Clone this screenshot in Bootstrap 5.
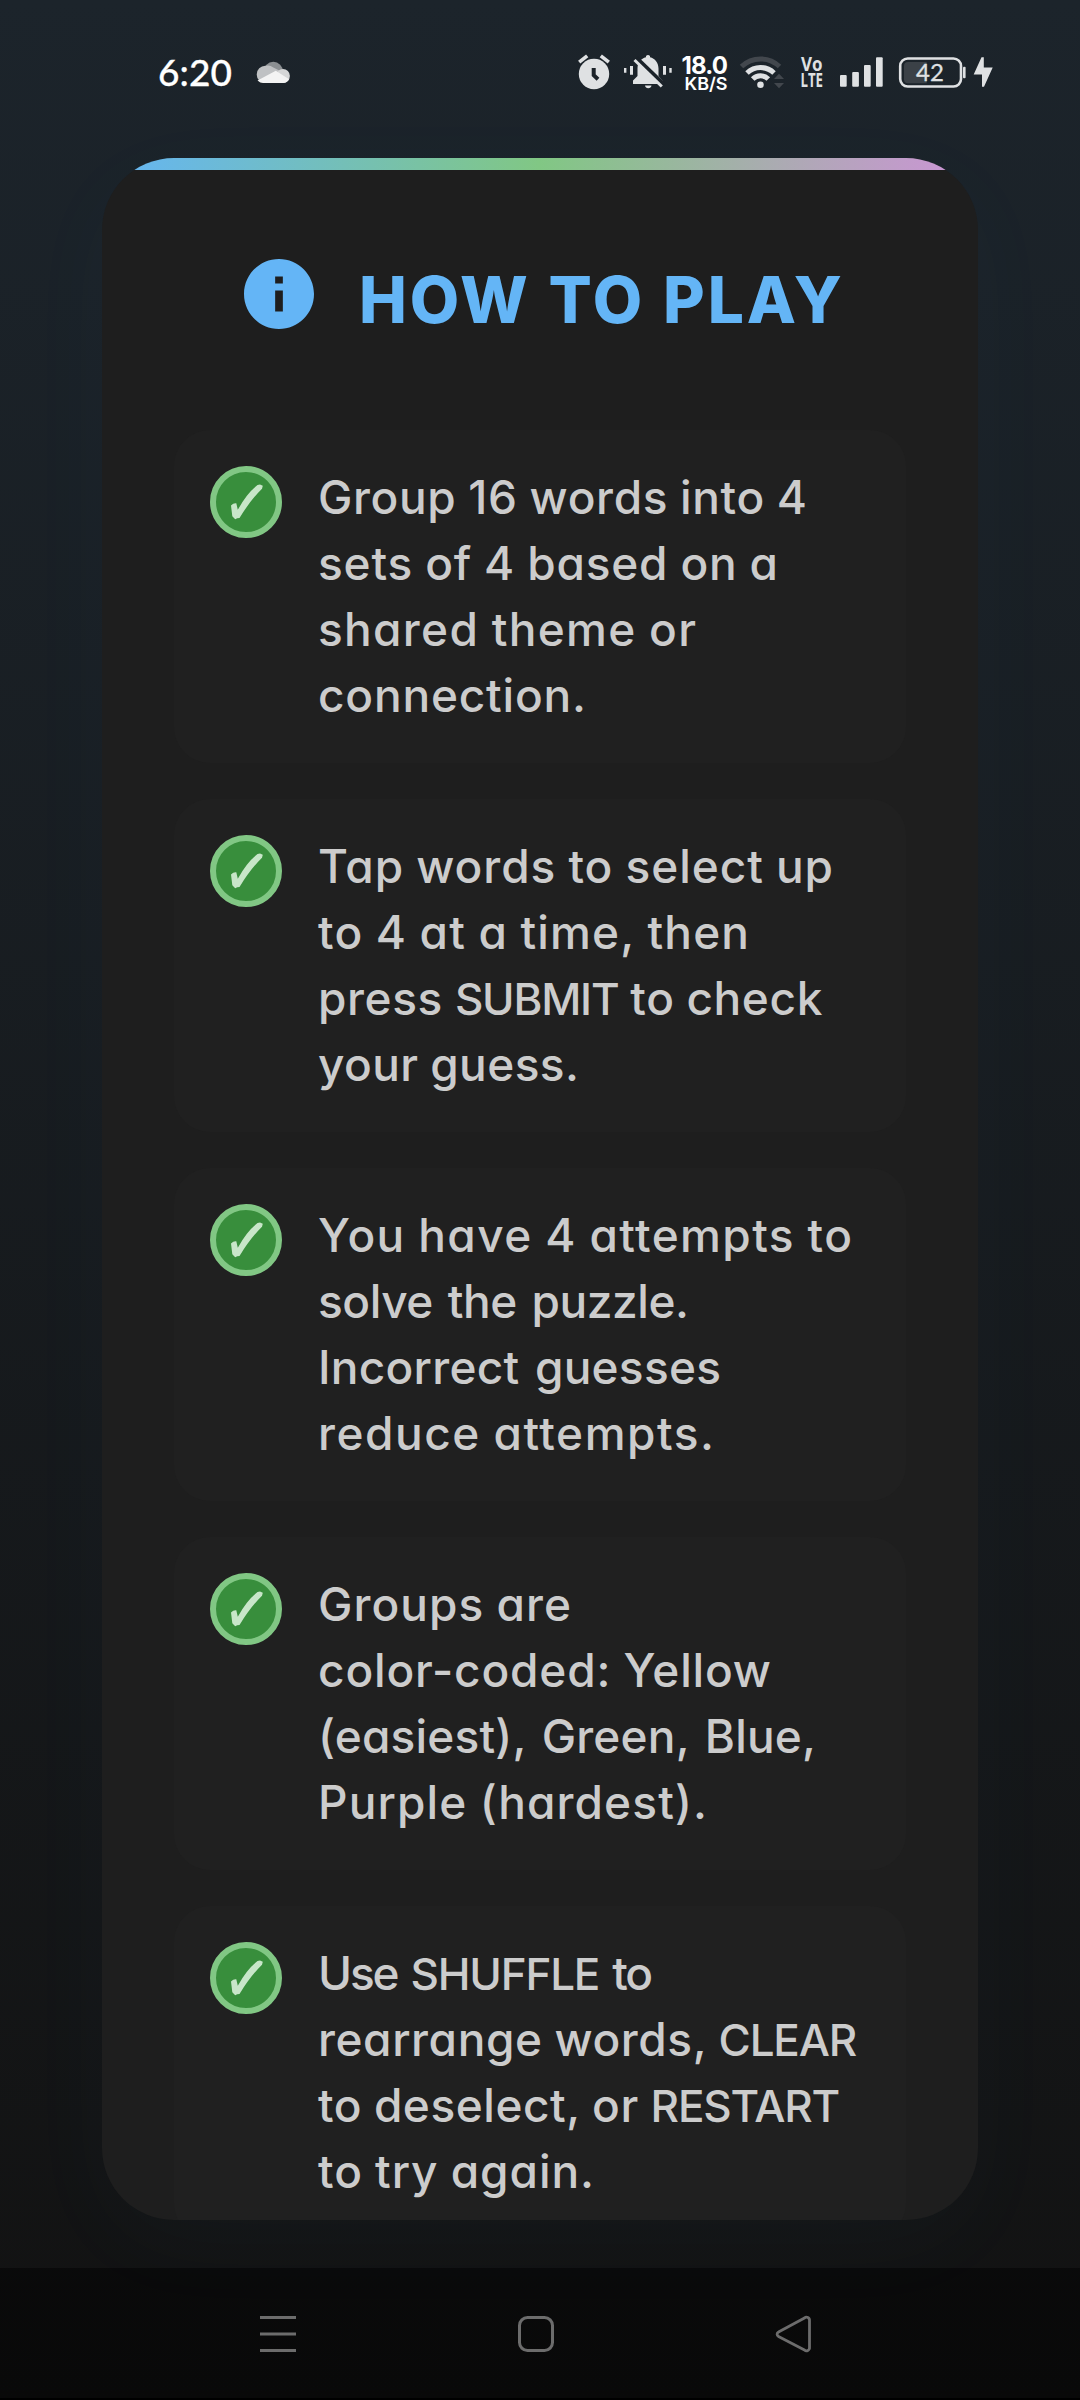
<!DOCTYPE html>
<html lang="en">
<head>
<meta charset="utf-8">
<meta name="viewport" content="width=device-width, initial-scale=1">
<title>How to play</title>
<link href="https://cdn.jsdelivr.net/npm/bootstrap@5.3.0/dist/css/bootstrap.min.css" rel="stylesheet">
<style>
  body { background: #121212; font-family: Inter, "Liberation Sans", sans-serif; }
  .phone { width: 1080px; height: 2400px; background: linear-gradient(180deg, #1c242b 0%, #121212 100%); }
  .status { height: 158px; padding-left: 158px; color: #fff; }
  .status svg { display: block; flex: none; }
  .clock { font: 500 37px/44px Lato, sans-serif; width: 98px; padding-top: 50px; -webkit-text-stroke: .3px #fff; }
  .panel { width: 876px; height: 2062px; margin: 0 102px; border-radius: 72px; background: #1e1e1e;
    box-shadow: 0 24px 96px rgba(100, 181, 246, .03); }
  .stripe { height: 12px; background: linear-gradient(90deg, #64b5f6, #81c784, #ce93d8); }
  .heading { height: 260px; padding: 82px 0 0 135px; gap: 38px; color: #64b5f6; }
  .heading h1 { font-size: 64px; font-weight: 800; line-height: 84px; padding-top: 6px; word-spacing: 1px; }
  .rules { padding: 0 72px; gap: 36px; }
  .rule { height: 333px; flex: none; padding: 36px; gap: 36px; border-radius: 36px; background: #202020; }
  .tick { width: 72px; height: 72px; flex: none; }
  .rule p { margin-top: -2px; font-size: 46px; font-weight: 500; line-height: 66px; color: #ccc;
    word-spacing: -1px; font-feature-settings: "cv11"; }
  .fit { display: inline-block; white-space: pre; }
  .caps { font-size: 44px; line-height: 1; letter-spacing: -1.2px; }
  .wide { word-spacing: 3px; }
  .navkeys { height: 132px; margin-top: 48px; background: rgba(0, 0, 0, .45); border-bottom: 2px solid #000; padding: 46px 266px 0 258px; }
</style>
</head>
<body>
<div class="phone d-flex flex-column overflow-hidden">
  <header class="status d-flex align-items-start">
    <div class="clock"><span class="fit" data-w="74">6:20</span></div>
    <svg width="36" height="110" viewBox="256 0 36 110">
      <circle cx="273.3" cy="71.5" r="9.7" fill="#8b8f92"/>
      <path d="M265.3 65.8a8.6 8.6 0 0 0 0 17.2h12l4-11.5-8-4a8.6 8.6 0 0 0-8-1.7z" fill="#bfc1c3"/>
      <circle cx="283" cy="76" r="6.9" fill="#d5d6d7"/>
      <path d="M257.5 80.5L275.8 70.8l13.3 8.4a6.9 6.9 0 0 1-6 3.8H265a8.6 8.6 0 0 1-7.500-2.500z" fill="#f3f3f3"/>
    </svg>
    <svg width="710" height="110" viewBox="292 0 710 110" fill="#dfe1e3">
      <!-- alarm -->
      <circle cx="594" cy="74" r="15.2"/>
      <path d="M579.2 62.2l8-6.4M600.8 55.8l8 6.4" stroke="#dfe1e3" stroke-width="3.6"/>
      <path d="M593.7 68v7.2l4.3 4" stroke="#1b2229" stroke-width="4" fill="none"/>
      <!-- vibrating bell, muted -->
      <path d="M624 68h2.4v4.7H624zM630 66h3v8.7h-3zM663 66h3v8.7h-3zM669.300 68h2.400v4.700h-2.400z"/>
      <path d="M633 84v-3.500l4.500-4.500V68.500c0-5.500 3.500-10 8.500-11.200v-1.300q2-2 4 0v1.300c5 1.200 8.500 5.700 8.500 11.200v7.500l4 4.500V84zM645 85.500h6.500a3.300 3.300 0 0 1-6.500 0z"/>
      <path d="M636.500 58l27.500 26.500" stroke="#1b2229" stroke-width="4"/>
      <path d="M634.500 60l27.300 26.500" stroke="#dfe1e3" stroke-width="3"/>
      <!-- network speed -->
      <g font-family="Inter, sans-serif" fill="#fff">
        <text x="681.500" y="73.700" font-size="24" font-weight="700" textLength="46.500">18.0</text>
        <text x="684.500" y="90.300" font-size="17.500" font-weight="600" textLength="43" lengthAdjust="spacingAndGlyphs">KB/S</text>
      </g>
      <!-- wifi -->
      <g fill="none" stroke-width="5">
        <path d="M741.500 66.500a27.500 27.500 0 0 1 38 0" stroke="#42474d"/>
        <path d="M747 73a19.500 19.500 0 0 1 27 0" stroke="#dfe1e3"/>
        <path d="M752.700 79a11 11 0 0 1 15.600 0" stroke="#dfe1e3"/>
      </g>
      <circle cx="760.500" cy="84.700" r="3.300"/>
      <path d="M774 79l5-5.300 5 5.300zM774 83h10l-5 5.300z" fill="#42474d"/>
      <!-- VoLTE -->
      <g font-family="'Open Sans', sans-serif" font-weight="700" font-size="19">
        <text x="801" y="71.200" textLength="21.500" lengthAdjust="spacingAndGlyphs">Vo</text>
        <text x="800.500" y="86.500" textLength="22.500" lengthAdjust="spacingAndGlyphs">LTE</text>
      </g>
      <!-- signal -->
      <rect x="840" y="75" width="6.700" height="11.700" rx="1"/>
      <rect x="852.200" y="72" width="6.700" height="14.700" rx="1"/>
      <rect x="864" y="65" width="6.700" height="21.700" rx="1"/>
      <rect x="876" y="57.300" width="6.700" height="29.400" rx="1"/>
      <!-- battery -->
      <rect x="900.200" y="58.500" width="60.800" height="28" rx="7.500" fill="none" stroke="#dfe1e3" stroke-width="2.600"/>
      <path d="M908 62h18.700v21.300H908a4 4 0 0 1-4-4V66a4 4 0 0 1 4-4z" fill="#3b4147"/>
      <rect x="963" y="66.700" width="2.600" height="11.500" rx="1"/>
      <text x="930" y="81.300" font-family="Lato, sans-serif" font-size="24" text-anchor="middle" stroke="#dfe1e3" stroke-width=".3">42</text>
      <path d="M981.500 57.300h2.300v10.200h8.900l-8.700 19.200h-2V74.500h-8.300z"/>
    </svg>
  </header>

  <main class="panel overflow-hidden flex-shrink-0">
    <div class="stripe"></div>
    <div class="heading d-flex align-items-start">
      <svg width="84" height="84" viewBox="0 0 24 24" fill="currentColor"><path d="M12 2C6.480 2 2 6.480 2 12s4.480 10 10 10 10-4.480 10-10S17.520 2 12 2zm1.100 15h-2.200v-6h2.200v6zm0-8h-2.200V7h2.200v2z"/></svg>
      <h1 class="m-0"><span class="fit" data-w="483">HOW TO PLAY</span></h1>
    </div>
    <div class="rules d-flex flex-column">
      <section class="rule d-flex">
        <svg class="tick" viewBox="0 0 72 72"><use href="#tick"/></svg>
        <p><span class="fit" data-w="489">Group 16 words into 4</span><br><span class="fit" data-w="460">sets of 4 based on a</span><br><span class="fit" data-w="378">shared theme or</span><br><span class="fit" data-w="268">connection.</span></p>
      </section>
      <section class="rule d-flex">
        <svg class="tick" viewBox="0 0 72 72"><use href="#tick"/></svg>
        <p><span class="fit" data-w="515">Tap words to select up</span><br><span class="fit" data-w="431">to 4 at a time, then</span><br><span class="fit" data-w="505">press <span class="caps">SUBMIT</span> to check</span><br><span class="fit" data-w="261">your guess.</span></p>
      </section>
      <section class="rule d-flex">
        <svg class="tick" viewBox="0 0 72 72"><use href="#tick"/></svg>
        <p><span class="fit" data-w="534">You have 4 attempts to</span><br><span class="fit wide" data-w="371">solve the puzzle.</span><br><span class="fit wide" data-w="403">Incorrect guesses</span><br><span class="fit" data-w="396">reduce attempts.</span></p>
      </section>
      <section class="rule d-flex">
        <svg class="tick" viewBox="0 0 72 72"><use href="#tick"/></svg>
        <p><span class="fit" data-w="253">Groups are</span><br><span class="fit" data-w="453">color-coded: Yellow</span><br><span class="fit wide" data-w="498">(easiest), Green, Blue,</span><br><span class="fit" data-w="389">Purple (hardest).</span></p>
      </section>
      <section class="rule d-flex">
        <svg class="tick" viewBox="0 0 72 72"><use href="#tick"/></svg>
        <p><span class="fit wide" data-w="333">Use <span class="caps">SHUFFLE</span> to</span><br><span class="fit" data-w="538">rearrange words, <span class="caps">CLEAR</span></span><br><span class="fit" data-w="521">to deselect, or <span class="caps">RESTART</span></span><br><span class="fit" data-w="276">to try again.</span></p>
      </section>
    </div>
  </main>

  <nav class="navkeys d-flex align-items-start justify-content-between flex-shrink-0">
    <svg width="40" height="40" viewBox="0 0 40 40" stroke="#6c6c6c" stroke-width="3"><path d="M2 3.500h36M2 20h36M2 36.500h36"/></svg>
    <svg width="40" height="40" viewBox="0 0 40 40" fill="none" stroke="#6c6c6c" stroke-width="3"><rect x="3.500" y="3.500" width="33" height="33" rx="8"/></svg>
    <svg width="40" height="40" viewBox="0 0 40 40" fill="none" stroke="#6c6c6c" stroke-width="2.800" stroke-linejoin="round"><path d="M4.500 18L30.500 4a3 3 0 0 1 5 2.500v27a3 3 0 0 1-5 2.500L4.500 22.500a2.500 2.500 0 0 1 0-4.500z"/></svg>
  </nav>
</div>

<svg width="0" height="0" class="position-absolute">
  <symbol id="tick" viewBox="0 0 72 72">
    <circle cx="36" cy="36" r="33" fill="#388e3c" stroke="#81c784" stroke-width="6"/>
    <path d="M21 39.500q2.500-2.600 5.300-2.200l1.500 6.400Q37 27 47.500 19l2.500-.6 2.800 1.300-.8 3Q40.500 34 29.500 52l-2.300.3-2 1-2.900-3z" fill="#c8e6c9"/>
  </symbol>
</svg>
<script>
  // Track each line so that it fills its intended measure; capitals keep their own tracking.
  document.querySelectorAll('.fit').forEach(function (line) {
    var caps = line.querySelector('.caps');
    var n = line.textContent.length - (caps ? caps.textContent.length : 1);
    var gap = (parseFloat(line.dataset.w) - line.getBoundingClientRect().width) / n;
    line.style.letterSpacing = gap.toFixed(3) + 'px';
  });
</script>
<script src="https://cdn.jsdelivr.net/npm/bootstrap@5.3.0/dist/js/bootstrap.bundle.min.js"></script>
</body>
</html>
